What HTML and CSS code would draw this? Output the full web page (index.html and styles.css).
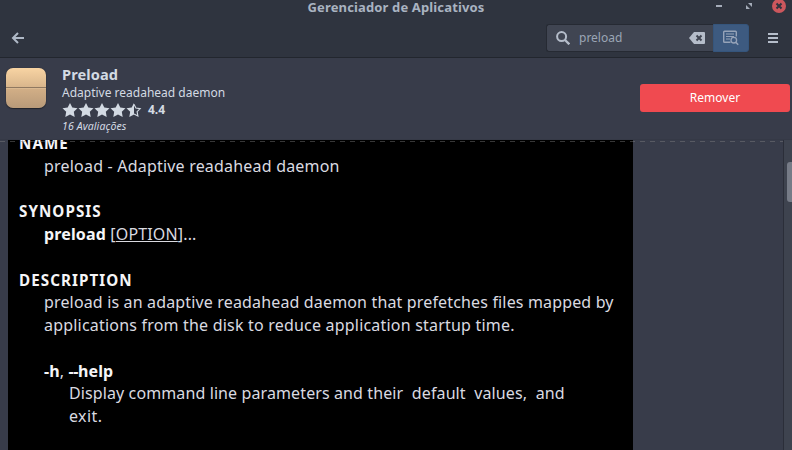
FILE: index.html
```
<!DOCTYPE html>
<html lang="pt-BR">
<head>
<meta charset="utf-8">
<title>Gerenciador de Aplicativos</title>
<link rel="stylesheet" href="styles.css">
</head>
<body>
<div class="window">
  <header class="header">
    <div class="titlebar">
      <h1 class="title">Gerenciador de Aplicativos</h1>
      <div class="controls">
        <svg width="74" height="14" viewBox="0 0 74 14">
          <path d="M1 6h6" stroke="#a5acb9" stroke-width="2"/>
          <path d="M33 3h4v4zM31 5v4h4z" fill="#a5acb9"/>
          <circle cx="64" cy="6" r="7" fill="#cc575d"/>
          <path d="M61.500 3.500l5 5m0-5l-5 5" stroke="#2f343f" stroke-width="2"/>
        </svg>
      </div>
    </div>
    <div class="toolbar">
      <svg class="back" width="14" height="14" viewBox="0 0 14 14"><path d="M13 7H2M7 2L2 7l5 5" fill="none" stroke="#afb8c6" stroke-width="2"/></svg>
      <div class="search">
        <svg width="14" height="14" viewBox="0 0 14 14"><circle cx="5.600" cy="5.600" r="4.500" fill="none" stroke="#b5bdca" stroke-width="2"/><path d="M9 9l4.300 4.300" stroke="#b5bdca" stroke-width="2.300"/></svg>
        <span class="query">preload</span>
        <svg width="16" height="12" viewBox="0 0 16 12"><path d="M5 0h10q1 0 1 1v10q0 1-1 1H5L0 6z" fill="#b5bdca"/><path d="M7.500 3.500l5 5m0-5l-5 5" stroke="#404552" stroke-width="2"/></svg>
      </div>
      <div class="detail">
        <svg width="16" height="16" viewBox="0 0 16 16" fill="none" stroke="#96a3b8"><path d="M7.500 12.300H1.500q-.8 0-.8-.8V2q0-.8.800-.8h11q.8 0 .8.800v4.500" stroke-width="1.400"/><path d="M3 4h8M3 6.500h8M3 9h4" stroke-width="1.200"/><circle cx="10.800" cy="10.200" r="2.800" stroke-width="1.300"/><path d="M12.800 12.200l2.400 2.500" stroke-width="1.500"/></svg>
      </div>
      <div class="menu"><i></i><i></i><i></i></div>
    </div>
  </header>
  <section class="app">
    <div class="app-icon"></div>
    <div class="info">
      <h2 class="name">Preload</h2>
      <p class="summary">Adaptive readahead daemon</p>
      <div class="rating">
        <svg width="80" height="14" viewBox="0 0 80 14" fill="#d3dae3">
          <defs><path id="star" d="M8 0l2.300 4.500 5.200.7-3.700 3.600.9 5.100L8 11.600l-4.700 2.300.9-5.100L.5 5.200l5.200-.7z"/></defs>
          <use href="#star"/><use href="#star" x="16"/><use href="#star" x="32"/><use href="#star" x="48"/>
          <path d="M72 0v11.600l-4.700 2.300.9-5.100L64.500 5.200l5.200-.7z"/>
          <path d="M72 1.200l1.900 3.800 4.300.6-3.100 3 .8 4.300-3.900-2" fill="none" stroke="#d3dae3" stroke-width="1.100"/>
        </svg>
        <b class="score">4.4</b>
      </div>
      <p class="reviews">16 Avaliações</p>
    </div>
    <button class="remove">Remover</button>
  </section>
  <main class="content">
    <div class="page">
      <div class="shot">
        <p class="line head l1">NAME</p>
        <p class="line in l2">preload - Adaptive readahead daemon</p>
        <p class="line"></p>
        <p class="line head">SYNOPSIS</p>
        <p class="line in l4"><b>preload</b> [<u>OPTION</u>]...</p>
        <p class="line"></p>
        <p class="line head">DESCRIPTION</p>
        <p class="line in l6">preload is an adaptive readahead daemon that prefetches files mapped by</p>
        <p class="line in l7">applications from the disk to reduce application startup time.</p>
        <p class="line"></p>
        <p class="line in l8"><b>-h</b>, <b><span class="dashes">--</span>help</b></p>
        <p class="line in2 l9">Display command line parameters and their&nbsp; default&nbsp; values,&nbsp; and</p>
        <p class="line in2 l10">exit.</p>
      </div>
      <div class="undershoot"></div>
    </div>
    <div class="scroll"><div class="thumb"></div></div>
  </main>
</div>
</body>
</html>
```

FILE: styles.css
```
* { box-sizing: border-box; }
body { margin: 0; font-family: "Noto Sans", sans-serif; font-size: 13px; color: #d3dae3; }
h1, h2, p { margin: 0; }
svg { display: block; flex: none; }
.window { width: 792px; height: 450px; overflow: hidden; background: #383c4a; display: flex; flex-direction: column; }
.header { height: 58px; flex: none; background: #2f343f; border-bottom: 1px solid #22262e; }
.titlebar { display: flex; height: 18px; position: relative; justify-content: center; }
.title { font-size: 13px; line-height: 14px; font-weight: 700; letter-spacing: .14px; color: #a9b3c1; }
.controls { position: absolute; right: 3px; top: 0; }
.toolbar { height: 39px; display: flex; align-items: center; padding: 1px 14px 0 11px; }
.search { margin-left: auto; width: 167px; height: 28px; background: #404552; border: 1px solid #262a33; border-right: 0; border-radius: 3px 0 0 3px; display: flex; align-items: center; padding: 0 8px 0 9px; }
.query { flex: 1; margin-left: 9px; font-size: 12px; line-height: 18px; padding-bottom: 1px; color: #9ba5b5; }
.detail { width: 36px; height: 28px; background: #3d5a80; border: 1px solid #35557c; border-radius: 0 3px 3px 0; display: flex; align-items: center; justify-content: center; }
.menu { width: 10px; margin-left: 19px; display: flex; flex-direction: column; gap: 2px; }
.menu i { height: 2px; background: #b5bdca; }
.app { height: 82px; flex: none; display: flex; padding: 0 2px 0 6px; border-bottom: 1px solid #353946; }
.app-icon { width: 40px; height: 40px; margin-top: 10px; border-radius: 7px; background: linear-gradient(#f8d4a3, #d9b68c 19px, #8f7860 19px, #8f7860 20px, #e3c39b 20px, #d1ae86 21px, #b89a79); box-shadow: 0 1px 1px #20232b, 0 0 1px #20232b; }
.info { margin-left: 16px; padding-top: 6px; }
.name { font-size: 14.600px; line-height: 20px; letter-spacing: .1px; }
.summary { font-size: 12px; line-height: 18px; }
.rating { display: flex; height: 14px; align-items: center; margin-top: 1px; }
.score { font-size: 12px; line-height: 14px; margin-left: 6px; }
.reviews { font-size: 10.500px; line-height: 14px; letter-spacing: .12px; font-style: italic; margin-top: 2px; }
.remove { margin: 26px 0 0 auto; width: 150px; height: 28px; border: 0; border-radius: 3px; background: #f04a50; color: #fff; font: 12px "Noto Sans", sans-serif; padding: 0 0 1px; }
.content { flex: 1; min-height: 0; display: flex; }
.page { flex: 1; padding-left: 8px; position: relative; overflow: hidden; }
.shot { width: 625px; height: 310px; overflow: hidden; background: #000; color: #dadae0; font-size: 16px; padding-left: 11px; }
.line { height: 22.750px; line-height: 22.750px; white-space: nowrap; }
.l1 { margin-top: -8px; }
.head { font-size: 15.200px; letter-spacing: 1.050px; font-weight: 700; color: #f5f5f7; }
.line b { color: #f5f5f7; }
.in { padding-left: 25px; }
.in2 { padding-left: 50px; }
.l2, .l7 { letter-spacing: .2px; }
.l4 { letter-spacing: .15px; }
.l6 { letter-spacing: .155px; }
.l8, .l9 { letter-spacing: .11px; }
.dashes { letter-spacing: -.3px; }
.l10 { letter-spacing: .4px; }
.undershoot { position: absolute; left: 0; right: 0; top: 1px; height: 1px; background: repeating-linear-gradient(90deg, #8886 0 5px, transparent 5px 10px); }
.scroll { width: 9px; flex: none; background: #3e434f; border-left: 1px solid #2b2e39; padding: 22px 0 0 3px; }
.thumb { width: 5px; height: 40px; border-radius: 3px 0 0 3px; background: #767b87; }
```
